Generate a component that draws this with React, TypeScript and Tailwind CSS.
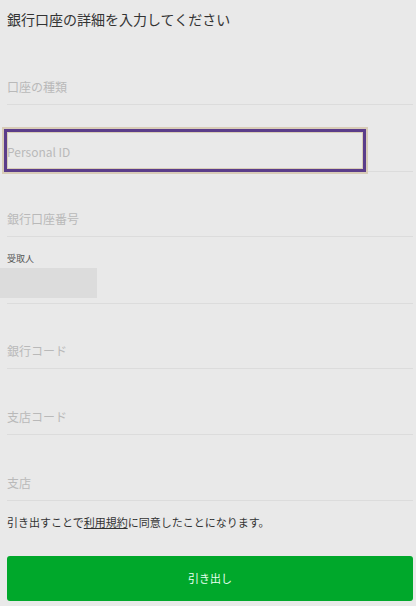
const fields: [string, string][] = [
  ['銀行コード', 'h-[65px]'],
  ['支店コード', 'h-[66px]'],
  ['支店', 'h-[66px]'],
];

function Field({ placeholder, h = 'h-[66px]' }: { placeholder: string; h?: string }) {
  return (
    <div className={`${h} flex flex-col justify-end`}>
      <input
        placeholder={placeholder}
        className="h-[37px] w-full bg-transparent text-[12px] text-[#333] placeholder:text-[#b9b9b9] outline-none border-b border-[#dcdcdc]"
      />
    </div>
  );
}

export default function App() {
  return (
    <div
      className="w-[416px] h-[606px] bg-[#e9e9e9] pl-[7px] pr-[3px] overflow-hidden"
      style={{ fontFamily: '"Noto Sans CJK JP", "Noto Sans", sans-serif' }}
    >
      <div className="h-[39px] pt-[8px] text-[14px] leading-[22px] text-[#333]">
        銀行口座の詳細を入力してください
      </div>
      <Field placeholder="口座の種類" />
      <div className="relative h-[67px] flex flex-col justify-end">
        <input
          placeholder="Personal ID"
          className="h-[40px] w-full bg-transparent text-[12px] text-[#333] placeholder:text-[#b9b9b9] outline-none border-b border-[#dcdcdc]"
        />
        <div className="absolute left-[-5px] top-[22px] w-[366px] h-[47px] border-2 border-[#d8ccb8] pointer-events-none">
          <div className="h-full w-full border-[3px] border-[#5b3d8a]">
            <div className="h-full w-full border border-[#d8ccb8]" />
          </div>
        </div>
      </div>
      <Field placeholder="銀行口座番号" h="h-[65px]" />
      <div className="h-[67px] flex flex-col justify-end border-b border-[#dcdcdc]">
        <div className="text-[9px] leading-[12px] text-[#555]">受取人</div>
        <div className="-ml-[7px] mt-[3px] mb-[5px] w-[97px] h-[30px] bg-[#dcdcdc]" />
      </div>
      {fields.map(([f, h]) => (
        <Field key={f} placeholder={f} h={h} />
      ))}
      <p className="mt-[13px] text-[11px] leading-[16px] text-[#333]">
        引き出すことで<a className="underline">利用規約</a>に同意したことになります。
      </p>
      <button className="mt-[26px] w-full h-[45px] rounded-[3px] bg-[#00a82b] text-[11px] text-[#e6fff0]">
        引き出し
      </button>
    </div>
  );
}
